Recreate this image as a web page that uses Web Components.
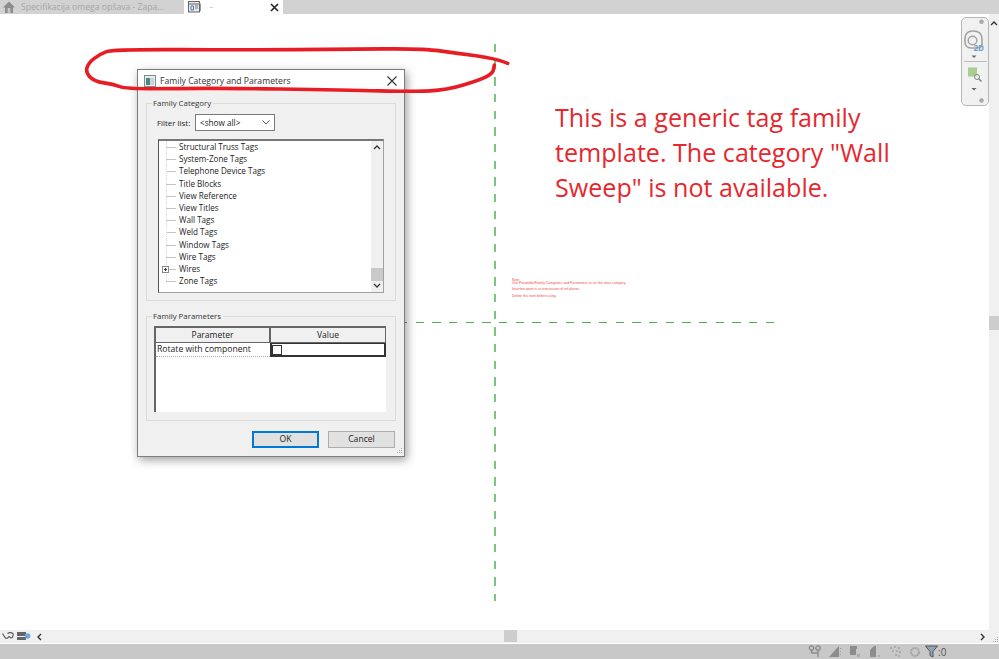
<!DOCTYPE html>
<html><head><meta charset="utf-8"><style>
html,body{margin:0;height:100%;overflow:hidden}
body{font-family:"Open Sans","Noto Sans",sans-serif}
</style></head><body>
<app-shell></app-shell>
<template id="t-tabs"><style>
:host{display:flex;height:14px;background:#d2d2d2;flex:none;overflow:hidden;font:8.650px/14px "Open Sans",sans-serif}
.tab{display:flex;align-items:center;height:14px;box-sizing:border-box}
.a{width:184px;padding-left:3px;color:#a6a6a6;gap:6px}
.b{width:99px;background:#fff;padding-left:4px;color:#aaa;gap:9px}
.x{margin-left:auto;margin-right:4px;display:block}
svg{flex:none;display:block}
span{white-space:nowrap}
</style>
<div class="tab a"><svg width="12" height="12" viewBox="0 0 12 12"><path d="M6 .5 0 6.500h2V12h8V6.500h2z" fill="#8c8c8c"/><rect x="4.600" y="7" width="2.800" height="5" fill="#c8c8c8"/></svg><span>Specifikacija omega opšava - Zapa...</span></div>
<div class="tab b"><svg width="13" height="12" viewBox="0 0 13 12"><rect x=".5" y=".5" width="11" height="10.500" fill="#e8e8e8" stroke="#666"/><path d="M1 3h10" stroke="#666"/><path d="M3 5h2.500v4H3zM7 5h3M7 7h3" stroke="#5b7c99" fill="none"/><path d="M11.500 2l1 1v7" stroke="#999" fill="none"/></svg><span>-</span><svg class="x" width="9" height="9" viewBox="0 0 9 9"><path d="M1 1l7 7M8 1 1 8" stroke="#222" stroke-width="1.600"/></svg></div>
</template>

<template id="t-canvas"><style>
:host{display:block;position:relative;flex:1;background:#fff;overflow:hidden;min-height:0}
.v{position:absolute;left:494px;top:30px;width:2px;height:557px;background:repeating-linear-gradient(to bottom,#7cc67c 0 8.300px,transparent 8.300px 16.670px)}
.h{position:absolute;left:399px;top:307.500px;width:375px;height:1.400px;background:repeating-linear-gradient(to right,#4fae4f 0 8.300px,transparent 8.300px 16.670px)}
.note{position:absolute;left:555px;top:86px;width:360px;color:#e6282e;font:25.100px/35px "Open Sans",sans-serif}
.tiny{position:absolute;left:512px;top:263.500px;color:#ee4c4c;font:3.450px/4px "Liberation Sans",sans-serif;white-space:nowrap}
.tiny div:nth-child(1){margin-bottom:-.5px}
.tiny div:nth-child(2){margin-bottom:2px}
.tiny div:nth-child(3){margin-bottom:2.500px}
svg.ring{position:absolute;left:0;top:0;pointer-events:none;z-index:3}
family-dialog{position:absolute;left:137px;top:55px}
view-bar{position:absolute;left:961px;top:3px;z-index:1}
.sb{position:absolute;left:989px;top:0;bottom:0;width:10px;background:#f0f0f0}
.th{position:absolute;left:989px;top:302px;width:10px;height:14px;background:#cdcdcd}
.up{position:absolute;left:990px;top:6px}
</style>
<div class="v"></div><div class="h"></div>
<div class="note">This is a generic tag family template. The category "Wall Sweep" is not available.</div>
<div class="tiny"><div>Note:</div><div>Use Preamble/Family Categories and Parameters to set the main category.</div><div>Insertion point is at intersection of ref planes.</div><div>Delete this note before using.</div></div>
<div class="sb"></div><div class="th"></div>
<svg class="up" width="8" height="6" viewBox="0 0 8 6"><path d="M1 5l3-3 3 3" fill="none" stroke="#333" stroke-width="1.400"/></svg>
<family-dialog></family-dialog>
<view-bar></view-bar>
<svg class="ring" width="999" height="616" viewBox="0 14 999 616"><path id="rp" fill="none" stroke="#e81c24" stroke-width="3.600" stroke-linecap="round" stroke-linejoin="round"/></svg>
</template>

<template id="t-view"><style>
:host{display:block;width:28px;height:89px;box-sizing:border-box;border:1px solid #b5b5b5;border-radius:5px;background:#f1f1f1}
svg{display:block}
</style><svg width="26" height="87" viewBox="0 0 26 87"><circle cx="19.500" cy="3.700" r="2.300" fill="#aaa"/><circle cx="19.500" cy="82.500" r="2.300" fill="#aaa"/><path d="M3 21c0-5 3-8 8-8 6 0 9 2 9 8v5c0 3-2 4-5 4H9c-4 0-6-3-6-6z" fill="none" stroke="#a2a2a2" stroke-width="1.600"/><circle cx="10.500" cy="22.500" r="4.300" fill="none" stroke="#a2a2a2" stroke-width="1.400"/><text x="11.500" y="33" font-family="Open Sans,sans-serif" font-weight="700" font-size="8" fill="#6f9fd0">2D</text><path d="M9.500 37.500h5l-2.500 2.500z" fill="#666"/><path d="M2 43.500h23" stroke="#bdbdbd"/><rect x="6" y="49.500" width="9" height="9" fill="#a9cf8e"/><circle cx="15" cy="59" r="2.500" fill="#eee" stroke="#888"/><path d="M17 61l2.500 2.500" stroke="#777" stroke-width="1.300"/><path d="M9.500 70h5L12 72.500z" fill="#666"/></svg>
</template>

<template id="t-dialog"><style>
:host{display:block;width:268px;height:388px;box-sizing:border-box;border:1px solid #7d7d7d;background:#f0f0f0;box-shadow:2px 3px 9px rgba(0,0,0,.38);color:#222;font:8.600px/12px "Open Sans",sans-serif;position:relative}
.title{height:21px;background:#fff;display:flex;align-items:center;padding:0 7px 0 6px;gap:4px;color:#333;font-size:8.650px}
.title svg.c{margin-left:auto}
.body{display:flex;flex-direction:column;padding:6px 8px 0}
fieldset{margin:0;padding:0;border:1px solid #dcdcdc;min-width:0;box-sizing:border-box}
legend{padding:0 2px 0 1px;line-height:12px;color:#333;font-size:7.850px}
.cat{height:204px;padding:0 0 0 11px}
.cat legend{margin-left:-6px}
.filter{display:flex;align-items:center;height:17px;margin:5px 0 8px -1px}
.lab{width:38px;flex:none;white-space:nowrap;font-size:7.900px}
.sel{width:80px;height:17px;box-sizing:border-box;border:1px solid #7a7a7a;background:#fff;display:flex;align-items:center;padding:0 4px;justify-content:space-between;font-size:8.200px}
.list{width:226px;height:154px;box-sizing:border-box;border:1px solid #a0a0a0;border-left:1px solid #555;border-top:2px solid #777;background:#fff;display:flex;overflow:hidden}
.rows{flex:1;position:relative}
.sbv{width:12px;background:#f0f0f0;position:relative}
.sbv .th{position:absolute;left:0;right:0;top:127px;height:13px;background:#c9c9c9}
.sbv svg{position:absolute;left:2px}
.par{height:111px;margin-top:9px;padding:0 0 0 7px}
.par legend{margin-left:-2px}
.grid{width:232px;height:86px;box-sizing:border-box;border-left:2px solid #666;background:#fff;margin-top:4px}
.hd{display:flex;height:17px;background:#f0f0f0;box-sizing:border-box;border:1px solid #666;border-left:0;border-top-width:2px;text-align:center;line-height:14px;font-size:8.500px}
.hd div:first-child{width:115px;border-right:2px solid #666;box-sizing:border-box}
.hd div:last-child{flex:1}
.row{display:flex;height:14px}
.row .n{width:114px;box-sizing:border-box;padding-left:1px;line-height:13px;border-bottom:1px dotted #aaa;white-space:nowrap}
.row .v{flex:1;box-sizing:border-box;border:1px solid #333;border-width:1px 2px 2px 2px;position:relative;background:#fff}
.cb{position:absolute;left:0;top:1px;width:10px;height:10px;box-sizing:border-box;border:1px solid #333;background:#fff}
.btns{display:flex;justify-content:flex-end;gap:9px;padding:10px 1px 0 0}
.btn{width:67px;height:17px;box-sizing:border-box;border:1px solid #adadad;background:#e1e1e1;text-align:center;line-height:15px}
.btn.ok{border:2px solid #0078d7;line-height:13px}
.grip{position:absolute;right:1px;bottom:1px}
</style>
<div class="title"><svg width="12" height="12" viewBox="0 0 12 12"><rect x=".5" y=".5" width="11" height="11" fill="#e8ecec" stroke="#888"/><rect x="2" y="3" width="4" height="7" fill="#3f8b86"/><rect x="6.500" y="3" width="3.500" height="7" fill="#c3d3de"/></svg><span>Family Category and Parameters</span><svg class="c" width="10" height="10" viewBox="0 0 10 10"><path d="M.5.500l9 9M9.500.500l-9 9" stroke="#333" stroke-width="1.100"/></svg></div>
<div class="body">
<fieldset class="cat"><legend>Family Category</legend>
<div class="filter"><span class="lab">Filter list:</span><div class="sel"><span>&lt;show all&gt;</span><svg width="8" height="5" viewBox="0 0 8 5"><path d="M.5.500l3.500 3.500L7.500.500" fill="none" stroke="#555"/></svg></div></div>
<div class="list"><tree-rows class="rows"></tree-rows><div class="sbv"><svg style="top:3px" width="8" height="6" viewBox="0 0 8 6"><path d="M1 5l3-3 3 3" fill="none" stroke="#333" stroke-width="1.300"/></svg><div class="th"></div><svg style="bottom:3px" width="8" height="6" viewBox="0 0 8 6"><path d="M1 1l3 3 3-3" fill="none" stroke="#333" stroke-width="1.300"/></svg></div></div>
</fieldset>
<fieldset class="par"><legend>Family Parameters</legend>
<div class="grid"><div class="hd"><div>Parameter</div><div>Value</div></div><div class="row"><div class="n">Rotate with component</div><div class="v"><div class="cb"></div></div></div></div>
</fieldset>
<div class="btns"><div class="btn ok">OK</div><div class="btn">Cancel</div></div>
</div>
<svg class="grip" width="8" height="8" viewBox="0 0 8 8"><path d="M6 1h1v1H6zM4 3h1v1H4zM6 3h1v1H6zM2 5h1v1H2zM4 5h1v1H4zM6 5h1v1H6z" fill="#aaa"/></svg>
</template>

<template id="t-rows"><style>
:host{display:block;font:8.100px/12.200px "Open Sans",sans-serif;color:#222}
.r{height:12.200px;display:flex;align-items:center;position:relative;padding-left:20px;white-space:nowrap}
.r::before{content:"";position:absolute;left:7px;width:10px;top:6px;border-top:1px solid #c4c4c4}
.r::after{content:"";position:absolute;left:7px;top:0;bottom:0;border-left:1px dotted #ddd}
.r:last-child::after{bottom:6px}
.p{position:absolute;left:3px;top:3px;width:7px;height:7px;box-sizing:border-box;border:1px solid #8a8a8a;background:#fff;z-index:1}
.p::before{content:"";position:absolute;left:1px;right:1px;top:2px;height:1px;background:#333}
.p::after{content:"";position:absolute;top:1px;bottom:1px;left:2px;width:1px;background:#333}
</style><div id="w"></div></template>

<template id="t-hs"><style>
:host{display:block;height:13px;background:#f0f0f0;position:relative;flex:none}
.th{position:absolute;left:504px;top:0;width:13px;height:12px;background:#cdcdcd}
svg{position:absolute;top:3px}
</style>
<svg style="left:2px;top:1px" width="12" height="9" viewBox="0 0 12 9"><path d="M.5 2.500 3 6.500c1 1 2 1 3 .2L7 5.500 9 7c1.500 0 2.500-2 2-4.500-1.500-1-4-1-5.500 0" fill="none" stroke="#555" stroke-width="1.100"/></svg>
<svg style="left:17px;top:1px" width="14" height="10" viewBox="0 0 14 10"><rect x="0" y="1" width="9" height="4" fill="#666"/><rect x="0" y="6" width="9" height="3" fill="#666"/><circle cx="10.500" cy="5" r="2.800" fill="#6fa6de"/></svg>
<svg style="left:36px" width="7" height="8" viewBox="0 0 7 8"><path d="M5 1 2 4l3 3" fill="none" stroke="#333" stroke-width="1.400"/></svg>
<div class="th"></div>
<svg style="left:979px" width="7" height="8" viewBox="0 0 7 8"><path d="M2 1l3 3-3 3" fill="none" stroke="#333" stroke-width="1.400"/></svg>
<svg style="left:992px;top:6px" width="7" height="7" viewBox="0 0 7 7"><path d="M5 1h1v1H5zM3 3h1v1H3zM5 3h1v1H5zM1 5h1v1H1zM3 5h1v1H3zM5 5h1v1H5z" fill="#aaa"/></svg>
</template>

<template id="t-status"><style>
:host{display:flex;height:16px;background:#c8c8c8;flex:none;justify-content:flex-end;align-items:center;box-sizing:border-box;padding-right:53px;border-top:1px solid #fff;font:10px/14px "Open Sans",sans-serif;color:#555}
.s{width:20px;display:flex;justify-content:center;flex:none}
svg{display:block;flex:none}
.f{display:flex;align-items:center;width:21px;flex:none}
</style>
<div class="s"><svg width="14" height="13" viewBox="0 0 14 13"><circle cx="3.500" cy="3" r="2.200" fill="none" stroke="#8a8a8a" stroke-width="1.300"/><circle cx="10" cy="3" r="2.200" fill="none" stroke="#8a8a8a" stroke-width="1.300"/><path d="M3.500 5v3M10 5v7M3.500 8H10" stroke="#8a8a8a" stroke-width="1.300"/></svg></div>
<div class="s"><svg width="15" height="13" viewBox="0 0 15 13"><path d="M1 12 9 3l2-2v11z" fill="#8d8d8d"/><path d="M12.500 3v1M12.500 6v1M12.500 9v1" stroke="#999"/></svg></div>
<div class="s"><svg width="14" height="13" viewBox="0 0 14 13"><path d="M2 1h7v3H8v6H2z" fill="#8d8d8d"/><path d="M9 9h3v3H9z" fill="#aaa"/></svg></div>
<div class="s"><svg width="12" height="13" viewBox="0 0 12 13"><path d="M1 12V5l4-4h2v11z" fill="#8d8d8d"/><path d="M9 11h2" stroke="#999"/></svg></div>
<div class="s"><svg width="13" height="13" viewBox="0 0 13 13"><g fill="#a3a3a3"><circle cx="2" cy="3" r="1"/><circle cx="6" cy="2" r="1"/><circle cx="10" cy="3" r="1"/><circle cx="4" cy="6" r="1"/><circle cx="8" cy="6" r="1"/><circle cx="11" cy="7" r="1"/><circle cx="7" cy="10" r="1"/><circle cx="10" cy="11" r="1"/></g></svg></div>
<div class="s"><svg width="12" height="12" viewBox="0 0 12 12"><circle cx="6" cy="6" r="4" fill="none" stroke="#a5a5a5" stroke-width="2" stroke-dasharray="2 .6"/></svg></div>
<div class="f"><svg width="13" height="13" viewBox="0 0 13 13"><path d="M.5 1h12L8 6.500V12l-3-1.500v-4z" fill="#8ea5b8" stroke="#555"/></svg><span>:0</span></div>
</template>

<script>
function mk(name,tid,init){customElements.define(name,class extends HTMLElement{constructor(){super();this.attachShadow({mode:"open"}).appendChild(document.getElementById(tid).content.cloneNode(true));if(init)init(this.shadowRoot)}})}
mk("tree-rows","t-rows",s=>{
  const w=s.getElementById("w");
  ["Structural Truss Tags","System-Zone Tags","Telephone Device Tags","Title Blocks","View Reference","View Titles","Wall Tags","Weld Tags","Window Tags","Wire Tags","Wires","Zone Tags"].forEach(t=>{
    const d=document.createElement("div");d.className="r";d.textContent=t;
    if(t==="Wires"){const p=document.createElement("i");p.className="p";d.appendChild(p)}
    w.appendChild(d)});
});
mk("family-dialog","t-dialog");
mk("view-bar","t-view");
mk("tab-bar","t-tabs");
mk("draw-canvas","t-canvas",s=>{
  const P=[[507.7,63.3],[495,58.3],[456.7,53.3],[423,48.5],[346.7,49.3],[246.7,50],[113,49.3],[100,54],[88,63.3],[85.7,73],[95,81.7],[113,84],[126.7,89.3],[213,88],[346.7,90],[413,91.7],[446.7,90],[480,80],[493,73.3],[494.3,65]];
  let d="M"+P[0].join(" ");
  for(let i=1;i<P.length-1;i++){const m=[(P[i][0]+P[i+1][0])/2,(P[i][1]+P[i+1][1])/2];d+=" Q"+P[i].join(" ")+" "+m.join(" ")}
  d+=" L"+P[P.length-1].join(" ");
  s.getElementById("rp").setAttribute("d",d);
});
mk("h-scroll","t-hs");
mk("status-bar","t-status");
customElements.define("app-shell",class extends HTMLElement{constructor(){super();const s=this.attachShadow({mode:"open"});s.innerHTML='<style>:host{display:flex;flex-direction:column;height:659px;width:999px}</style><tab-bar></tab-bar><draw-canvas></draw-canvas><h-scroll></h-scroll><status-bar></status-bar>'}});
</script>
</body></html>
